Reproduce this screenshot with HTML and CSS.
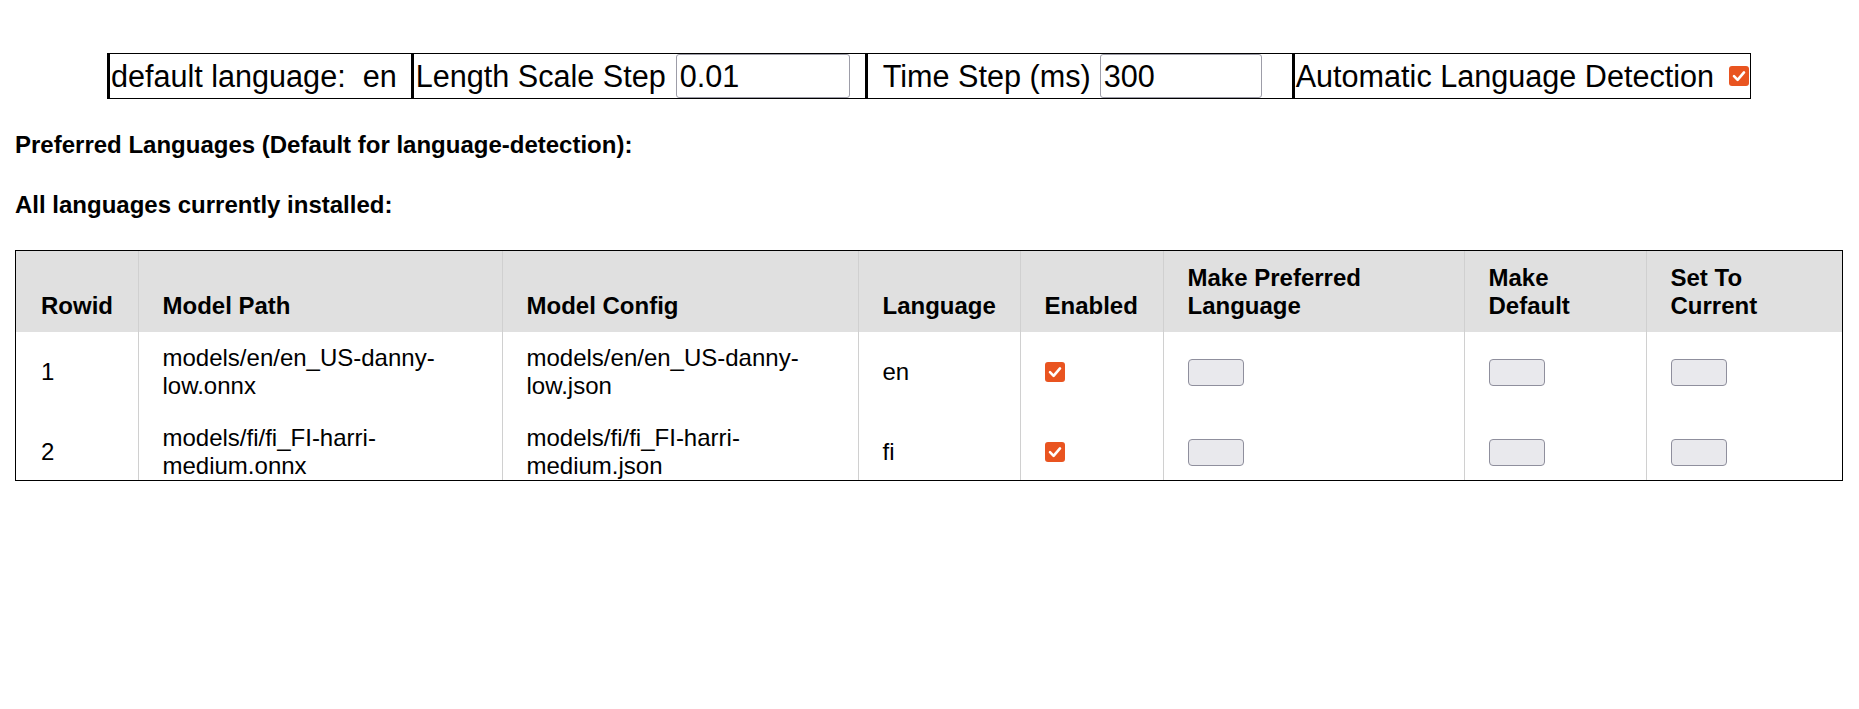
FILE: index.html
```html
<!DOCTYPE html>
<html lang="en">
<head>
<meta charset="utf-8">
<title>Languages</title>
<link rel="stylesheet" href="styles.css">
</head>
<body>
<div class="page">
  <div class="topbar-wrap">
    <div class="topbar">
      <div class="section s1"><span class="label">default language:&nbsp; en</span></div>
      <div class="section s2"><span class="label">Length Scale Step</span><input class="field f1" type="text" value="0.01"></div>
      <div class="section s3"><span class="label">Time Step (ms)</span><input class="field f2" type="text" value="300"></div>
      <div class="section s4"><span class="label">Automatic Language Detection</span><input class="check" type="checkbox" checked></div>
    </div>
  </div>

  <h3 class="heading">Preferred Languages (Default for language-detection):</h3>
  <h3 class="heading">All languages currently installed:</h3>

  <div class="table-wrap">
    <table class="langs">
      <colgroup>
        <col class="c-rowid">
        <col class="c-path">
        <col class="c-config">
        <col class="c-lang">
        <col class="c-enabled">
        <col class="c-pref">
        <col class="c-default">
        <col class="c-current">
      </colgroup>
      <thead>
        <tr>
          <th>Rowid</th>
          <th>Model Path</th>
          <th>Model Config</th>
          <th>Language</th>
          <th>Enabled</th>
          <th>Make Preferred Language</th>
          <th>Make Default</th>
          <th>Set To Current</th>
        </tr>
      </thead>
      <tbody>
        <tr>
          <td>1</td>
          <td>models/en/en_US-danny-low.onnx</td>
          <td>models/en/en_US-danny-low.json</td>
          <td>en</td>
          <td><input class="check" type="checkbox" checked></td>
          <td><button class="btn" type="button"></button></td>
          <td><button class="btn" type="button"></button></td>
          <td><button class="btn" type="button"></button></td>
        </tr>
        <tr>
          <td>2</td>
          <td>models/fi/fi_FI-harri-medium.onnx</td>
          <td>models/fi/fi_FI-harri-medium.json</td>
          <td>fi</td>
          <td><input class="check" type="checkbox" checked></td>
          <td><button class="btn" type="button"></button></td>
          <td><button class="btn" type="button"></button></td>
          <td><button class="btn" type="button"></button></td>
        </tr>
      </tbody>
    </table>
  </div>
</div>
</body>
</html>
```

FILE: styles.css
```css
html, body {
  margin: 0;
  padding: 0;
  background: #ffffff;
  color: #000000;
  font-family: "Liberation Sans", Arial, sans-serif;
}

.page {
  padding: 53px 16px 0 15px;
}

.topbar-wrap {
  display: flex;
  justify-content: center;
}

.topbar {
  display: flex;
  border-top: 1px solid #000;
  border-bottom: 1px solid #000;
  border-right: 1px solid #000;
  font-size: 30.6px;
  height: 44px;
}

.section {
  display: flex;
  align-items: center;
  border-left: 3px solid #000;
}

.section .label {
  white-space: pre;
  line-height: 34px;
}

.s1 { padding: 0 14px 0 1px; }
.s2 { padding: 0 15px 0 2px; }
.s3 { padding: 0 30px 0 15px; }
.s4 { padding: 0 1px 0 1px; }

.s2 .label { margin-right: 10px; }
.s3 .label { margin-right: 9px; }
.s4 .label { margin-right: 15px; }

.field {
  box-sizing: border-box;
  height: 44px;
  margin: 0;
  padding: 0 3px;
  border: 1px solid #9d9da8;
  border-radius: 3px;
  font-family: "Liberation Sans", Arial, sans-serif;
  font-size: 30.6px;
  color: #000;
  background: #fff;
}

.f1 { width: 174px; }
.f2 { width: 162px; }

.check {
  -webkit-appearance: none;
  appearance: none;
  box-sizing: border-box;
  width: 20px;
  height: 20px;
  margin: 0;
  border: none;
  border-radius: 3px;
  background-color: #e95420;
  background-image: url("data:image/svg+xml,%3Csvg xmlns='http://www.w3.org/2000/svg' viewBox='0 0 20 20'%3E%3Cpath d='M5 10.2 L8.6 13.8 L15 6.4' fill='none' stroke='%23ffffff' stroke-width='2.6' stroke-linecap='round' stroke-linejoin='round'/%3E%3C/svg%3E");
  background-size: 20px 20px;
  background-repeat: no-repeat;
  vertical-align: middle;
}

.heading {
  font-size: 24px;
  font-weight: bold;
  margin: 32px 0 0 0;
  line-height: 27.6px;
}

.table-wrap {
  margin-top: 32px;
  box-sizing: border-box;
  height: 231px;
  border: 1px solid #000;
  overflow: hidden;
}

.langs {
  width: 100%;
  table-layout: fixed;
  border-collapse: collapse;
  font-size: 24px;
  line-height: 28px;
}

.c-rowid { width: 122px; }
.c-path { width: 364px; }
.c-config { width: 356px; }
.c-lang { width: 162px; }
.c-enabled { width: 143px; }
.c-pref { width: 301px; }
.c-default { width: 182px; }
.c-current { width: auto; }

.langs th,
.langs td {
  text-align: left;
  border-left: 1px solid #d0d0d0;
}

.langs th:first-child,
.langs td:first-child {
  border-left: none;
}

.langs th {
  background: #e0e0e0;
  font-weight: bold;
  vertical-align: bottom;
  padding: 13px 24px 12px 24px;
}

.langs td {
  vertical-align: middle;
  padding: 12px 24px;
}

.langs th:first-child,
.langs td:first-child {
  padding-left: 25px;
}

.btn {
  display: block;
  box-sizing: border-box;
  width: 56px;
  height: 27px;
  margin: 0;
  padding: 0;
  border: 1px solid #8f8f9d;
  border-radius: 4px;
  background: #e9e9ed;
}

.langs td .check {
  display: block;
}
```
